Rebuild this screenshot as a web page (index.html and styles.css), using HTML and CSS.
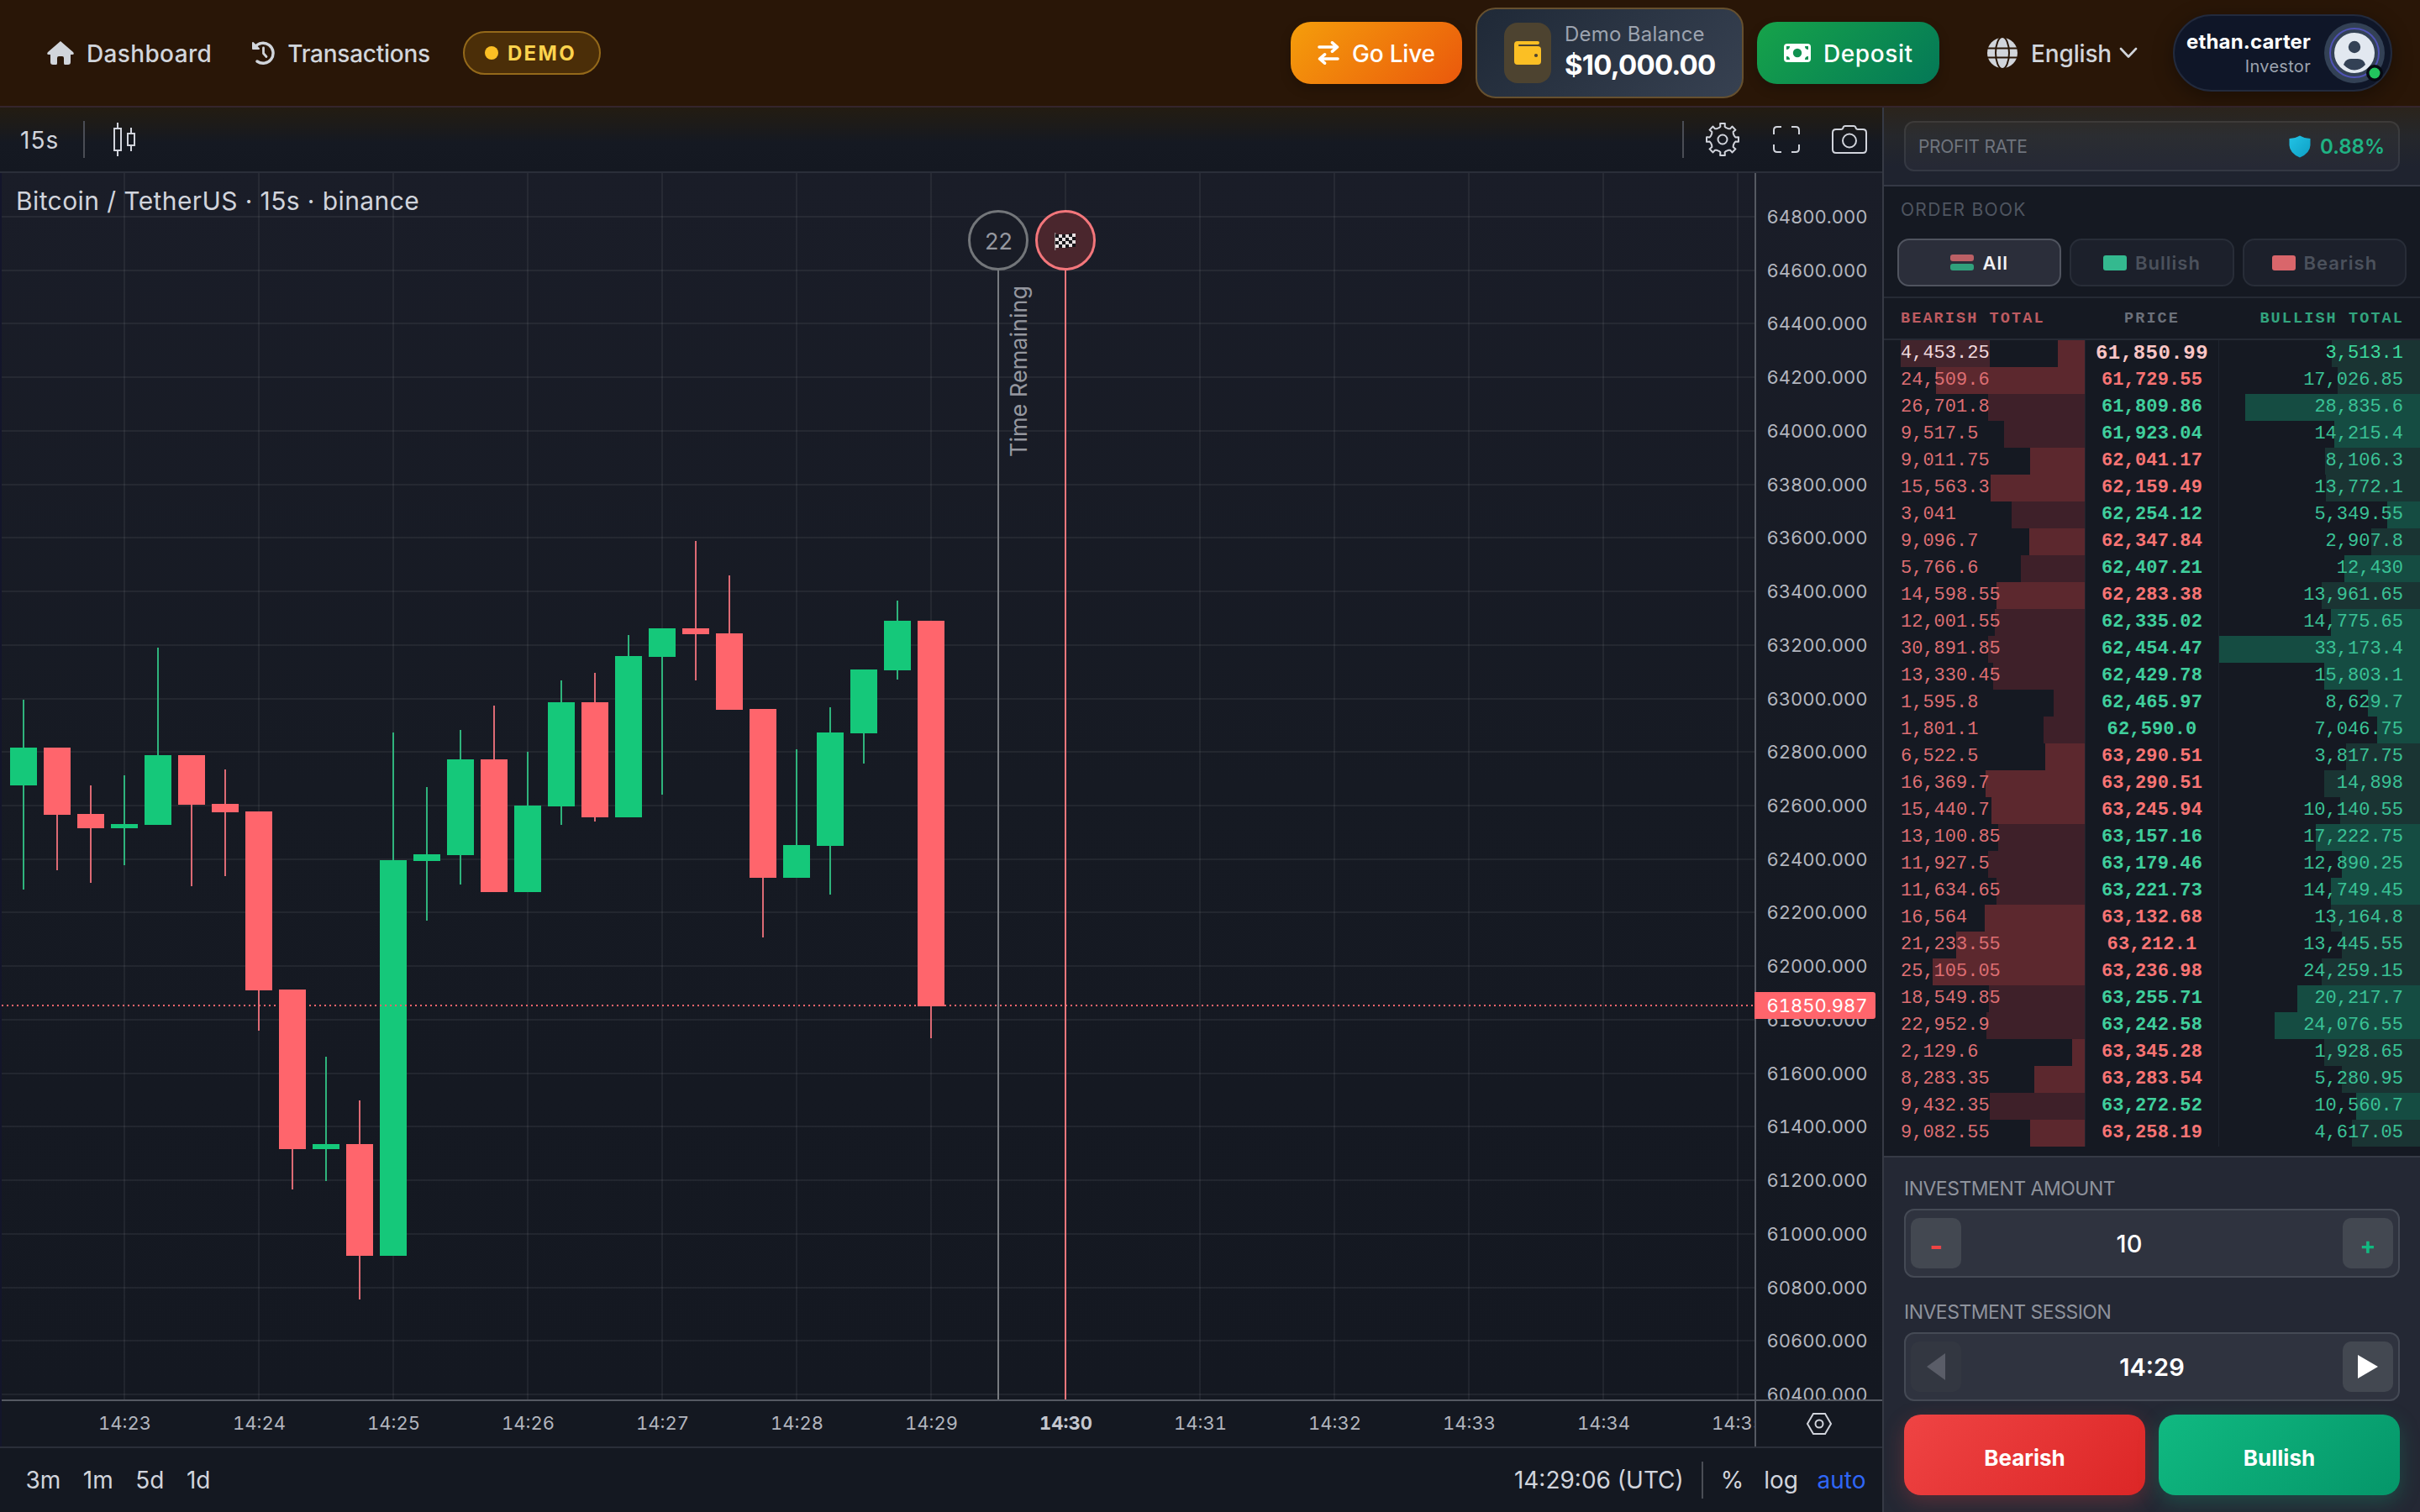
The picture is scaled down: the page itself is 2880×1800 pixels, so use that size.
FILE: index.html
```html
<!DOCTYPE html>
<html lang="en">
<head>
    <meta charset="UTF-8">
    <meta name="viewport" content="width=device-width, initial-scale=1.0">
    <title>Trading</title>
    <link rel="stylesheet" href="styles.css">
</head>
<body>
    <header class="header">
        <nav class="nav">
            <a class="nav-link">
                <svg width="32" height="28" viewBox="0 0 32 28"><path d="M16 0 L31 13 Q33 16 30 16 H28 V25 Q28 28 25 28 H21 Q20 28 20 26 V20 Q20 18 18 18 H14 Q12 18 12 20 V26 Q12 28 11 28 H7 Q4 28 4 25 V16 H2 Q-1 16 1 13 Z" fill="#d1d5db"/></svg>
                <span>Dashboard</span>
            </a>
            <a class="nav-link transactions">
                <svg width="28" height="28" viewBox="0 0 28 28" fill="none" stroke="#d1d5db" stroke-width="3.4" stroke-linecap="round" stroke-linejoin="round"><path d="M4.5 7 A12 12 0 1 1 7 24"/><path d="M2 2 V9 H9 Z" fill="#d1d5db" stroke-width="2"/><path d="M14.5 8 V14.5 L18 18.5" stroke-width="2.8"/></svg>
                <span>Transactions</span>
            </a>
            <span class="demo"><i class="demo-dot"></i>DEMO</span>
        </nav>
        <div class="header-right">
            <button class="btn btn-live">
                <svg width="26" height="28" viewBox="0 0 26 28" fill="none" stroke="#fff" stroke-width="3.6" stroke-linecap="round" stroke-linejoin="round"><path d="M2 7 H23 M17.5 1.8 L23.5 7 L17.5 12.2"/><path d="M24 21 H3 M8.5 15.8 L2.5 21 L8.5 26.2"/></svg>
                <span>Go Live</span>
            </button>
            <div class="balance">
                <span class="balance-icon">
                    <svg width="32" height="28" viewBox="0 0 32 28"><path d="M4 0 H28 Q30 0 30 2 Q30 4 28 4 H6 Q5 4 5 5 Q5 6 6 6 H28 Q32 6 32 10 V24 Q32 28 28 28 H4 Q0 28 0 24 V4 Q0 0 4 0 Z" fill="#fbbf24"/><circle cx="26" cy="17" r="2.1" fill="#4d4330"/></svg>
                </span>
                <span class="balance-text">
                    <span class="balance-label">Demo Balance</span>
                    <span class="balance-value">$10,000.00</span>
                </span>
            </div>
            <button class="btn btn-deposit">
                <svg width="32" height="22" viewBox="0 0 32 22"><rect width="32" height="22" rx="4" fill="#fff"/><circle cx="16" cy="11" r="5.2" fill="#119150"/><g fill="#119150"><path d="M3 3 H7 Q7 7 3 7 Z M29 3 H25 Q25 7 29 7 Z M3 19 H7 Q7 15 3 15 Z M29 19 H25 Q25 15 29 15 Z"/></g></svg>
                <span>Deposit</span>
            </button>
            <div class="lang">
                <svg width="36" height="36" viewBox="0 0 36 36"><circle cx="18" cy="18" r="18" fill="#d1d5db"/><g fill="none" stroke="#291607" stroke-width="2"><ellipse cx="18" cy="18" rx="8" ry="19"/><path d="M0 12.5 H36 M0 23.5 H36"/></g></svg>
                <span>English</span>
                <svg class="chevron" width="22" height="14" viewBox="0 0 22 14" fill="none" stroke="#d1d5db" stroke-width="2.6" stroke-linecap="round" stroke-linejoin="round"><path d="M2 2 L11 11.5 L20 2"/></svg>
            </div>
            <div class="profile">
                <div class="profile-text">
                    <span class="profile-name">ethan.carter</span>
                    <span class="profile-role">Investor</span>
                </div>
                <svg class="avatar" width="72" height="72" viewBox="0 0 72 72"><circle cx="36" cy="36" r="36" fill="#334155"/><circle cx="36" cy="36" r="29" fill="none" stroke="#4f52b5" stroke-width="2"/><circle cx="36" cy="36" r="24" fill="#e2e8f0"/><circle cx="36" cy="29" r="7.2" fill="#334155"/><path d="M23 50 Q25 43 32 43 H40 Q47 43 49 50 Q43 56.5 36 56.5 Q29 56.5 23 50 Z" fill="#334155"/><circle cx="60" cy="60" r="10" fill="#060a12"/><circle cx="60" cy="60" r="6.5" fill="#22c55e"/></svg>
            </div>
        </div>
    </header>

    <main class="main">
        <section class="chart">
            <div class="toolbar">
                <span class="interval">15s</span>
                <i class="sep"></i>
                <svg class="candle-icon" width="28" height="40" viewBox="0 0 28 40" fill="none" stroke="#d1d4dc" stroke-width="2"><path d="M6 0 V7 M6 33 V40 M2 7 H10 V33 H2 Z"/><path d="M22 6 V13 M22 27 V34 M18 13 H26 V27 H18 Z"/></svg>
                <div class="toolbar-right">
                    <i class="sep"></i>
                    <svg class="gear" width="40" height="40" viewBox="-20 -20 40 40" fill="none" stroke="#d1d4dc" stroke-width="2" stroke-linejoin="round"><path id="gear"/><circle r="5.5"/></svg>
                    <svg width="32" height="32" viewBox="0 0 32 32" fill="none" stroke="#d1d4dc" stroke-width="2"><path d="M1 10 V5 Q1 1 5 1 H10 M22 1 H27 Q31 1 31 5 V10 M31 22 V27 Q31 31 27 31 H22 M10 31 H5 Q1 31 1 27 V22"/></svg>
                    <svg width="42" height="34" viewBox="0 0 42 34" fill="none" stroke="#d1d4dc" stroke-width="2"><path d="M5 5 H11 Q13 5 13.5 3 Q14 1 16 1 H26 Q28 1 28.5 3 Q29 5 31 5 H37 Q41 5 41 9 V29 Q41 33 37 33 H5 Q1 33 1 29 V9 Q1 5 5 5 Z"/><circle cx="21" cy="18.5" r="8"/></svg>
                </div>
            </div>
            <svg class="plot" id="plot" width="2240" height="1516" viewBox="0 206 2240 1516"></svg>
            <div class="bottombar">
                <div class="ranges"><span>3m</span><span>1m</span><span>5d</span><span>1d</span></div>
                <div class="scale">
                    <span>14:29:06 (UTC)</span>
                    <i class="sep"></i>
                    <span>%</span>
                    <span class="log">log</span>
                    <span class="auto">auto</span>
                </div>
            </div>
        </section>

        <aside class="side">
            <div class="profit">
                <div class="profit-box">
                    <span>PROFIT RATE</span>
                    <span class="profit-rate">
                        <svg width="26" height="27" viewBox="0 0 26 27"><defs><linearGradient id="shield" x1="0" y1="0" x2="1" y2="1"><stop offset="0" stop-color="#22c3e6"/><stop offset="1" stop-color="#0e9fc4"/></linearGradient></defs><path d="M13 .5 Q18 3.5 25.5 4 V12 Q25 21.5 13 26.5 Q1 21.5 .5 12 V4 Q8 3.5 13 .5 Z" fill="url(#shield)"/></svg>
                        <b>0.88%</b>
                    </span>
                </div>
            </div>
            <div class="book-head">
                <div class="book-title">ORDER BOOK</div>
                <div class="tabs">
                    <button class="tab active"><i class="both"></i>All</button>
                    <button class="tab"><i class="sq green"></i>Bullish</button>
                    <button class="tab"><i class="sq red"></i>Bearish</button>
                </div>
            </div>
            <div class="book-cols">
                <span class="c-red">BEARISH TOTAL</span>
                <span class="c-mid">PRICE</span>
                <span class="c-green">BULLISH TOTAL</span>
            </div>
            <div class="book" id="book"></div>
            <div class="order">
                <label class="order-label">INVESTMENT AMOUNT</label>
                <div class="field">
                    <button class="step minus">-</button>
                    <span class="field-value amount">10</span>
                    <button class="step plus">+</button>
                </div>
                <label class="order-label">INVESTMENT SESSION</label>
                <div class="field">
                    <button class="step off"><svg width="22" height="32" viewBox="0 0 22 32"><path d="M22 0 V32 L0 16 Z" fill="#5a5d68"/></svg></button>
                    <span class="field-value">14:29</span>
                    <button class="step"><svg width="24" height="28" viewBox="0 0 24 28"><path d="M0 0 V28 L24 14 Z" fill="#fff"/></svg></button>
                </div>
                <div class="actions">
                    <button class="act bear">Bearish</button>
                    <button class="act bull">Bullish</button>
                </div>
            </div>
        </aside>
    </main>
    <script src="app.js"></script>
</body>
</html>
```

FILE: styles.css
```css
* {
    box-sizing: border-box;
}
body {
    margin: 0;
    width: 2880px;
    height: 1800px;
    overflow: hidden;
    background: #141821;
    color: #d1d4dc;
    font-family: Inter, "Liberation Sans", sans-serif;
    font-size: 28px;
    display: flex;
    flex-direction: column;
}
button {
    border: none;
    padding: 0;
    font-family: inherit;
    color: #fff;
}
svg {
    display: block;
    flex-shrink: 0;
}
span {
    white-space: nowrap;
}

/* header */
.header {
    height: 128px;
    flex-shrink: 0;
    background: #291607;
    border-bottom: 2px solid #35252c;
    display: flex;
    justify-content: space-between;
    align-items: center;
    padding: 0 33px 0 56px;
    font-weight: 500;
}
.nav, .header-right, .nav-link {
    display: flex;
    align-items: center;
}
.nav-link {
    gap: 15px;
    color: #d1d5db;
    margin-right: 47px;
    letter-spacing: 0.35px;
}
.nav-link span, .btn span, .lang span {
    padding-top: 1.5px;
}
.transactions {
    letter-spacing: -0.25px;
}
.demo {
    width: 164px;
    height: 52px;
    margin-left: -8px;
    border: 2px solid #94691a;
    border-radius: 26px;
    background: #4b2e08;
    color: #fcd34d;
    font-size: 24px;
    font-weight: 700;
    letter-spacing: 2.4px;
    display: flex;
    align-items: center;
    padding-left: 24px;
    gap: 11px;
}
.demo-dot {
    width: 16px;
    height: 16px;
    border-radius: 50%;
    background: #fbbf24;
}
.btn {
    height: 74px;
    border-radius: 24px;
    font-size: 28px;
    font-weight: 500;
    display: flex;
    align-items: center;
    gap: 15px;
    padding-left: 32px;
    box-shadow: 0 6px 14px rgba(0, 0, 0, 0.2);
}
.btn-live {
    width: 204px;
    background: linear-gradient(135deg, #f59e0b, #ea580c);
    letter-spacing: -0.2px;
}
.btn-deposit {
    width: 217px;
    background: linear-gradient(135deg, #16a34a, #047857);
    letter-spacing: 0.6px;
}
.balance {
    width: 319px;
    height: 108px;
    margin: 0 16px;
    border: 2px solid #66502f;
    border-radius: 24px;
    background: linear-gradient(135deg, #1f2937, #374151);
    display: flex;
    align-items: center;
    padding-left: 32px;
    gap: 16px;
}
.balance-icon {
    width: 56px;
    height: 72px;
    border-radius: 16px;
    background: #4d4330;
    display: flex;
    align-items: center;
    justify-content: center;
}
.balance-text {
    display: flex;
    flex-direction: column;
    padding-bottom: 5px;
}
.balance-label {
    font-size: 24px;
    line-height: 32px;
    font-weight: 400;
    letter-spacing: 0.25px;
    color: #9ca3af;
}
.balance-value {
    font-size: 33px;
    line-height: 40px;
    font-weight: 700;
    letter-spacing: -0.8px;
    color: #fff;
}
.lang {
    display: flex;
    align-items: center;
    margin-left: 57px;
    color: #d1d5db;
    gap: 16px;
    width: 221px;
    letter-spacing: -0.15px;
}
.chevron {
    margin-left: -7px;
}
.profile {
    width: 261px;
    height: 92px;
    border: 2px solid #222a3d;
    border-radius: 46px;
    background: #0f1628;
    box-shadow: 0 6px 24px rgba(0, 0, 0, 0.35);
    display: flex;
    align-items: center;
    justify-content: flex-end;
    padding-right: 7px;
    gap: 16px;
}
.profile-text {
    display: flex;
    flex-direction: column;
    align-items: flex-end;
    padding-top: 3px;
}
.profile-name {
    font-size: 24px;
    line-height: 30px;
    font-weight: 700;
    letter-spacing: 0.15px;
    color: #fff;
}
.profile-role {
    font-size: 20px;
    line-height: 29px;
    font-weight: 400;
    letter-spacing: 0.3px;
    color: #9ca3af;
}

/* chart */
.main {
    display: flex;
    flex: 1;
}
.chart {
    width: 2242px;
    border-right: 2px solid #363a45;
    display: flex;
    flex-direction: column;
}
.toolbar {
    height: 78px;
    border-bottom: 2px solid #2a2e39;
    background: linear-gradient(#231c12, #1d1b19 20px, #151922 42px, #141821);
    display: flex;
    align-items: center;
    padding: 0 18px 0 24px;
}
.interval {
    width: 75px;
    padding-top: 2px;
    letter-spacing: 1px;
}
.sep {
    width: 2px;
    height: 44px;
    background: #4a4d55;
}
.candle-icon {
    margin-left: 33px;
}
.toolbar-right {
    margin-left: auto;
    display: flex;
    align-items: center;
    gap: 38px;
}
.gear {
    margin: 0 2px 0 -12px;
}
.bottombar {
    height: 78px;
    border-top: 2px solid #2a2e39;
    display: flex;
    justify-content: space-between;
    align-items: center;
    padding: 0 19.5px 0 30.5px;
}
.ranges, .scale {
    display: flex;
    align-items: center;
}
.ranges {
    gap: 26.5px;
}
.scale .sep {
    margin: 0 21px;
}
.log {
    margin: 0 22.5px 0 24px;
}
.auto {
    color: #2f66f6;
}
.grid {
    stroke: #fff;
    stroke-opacity: 0.06;
    stroke-width: 2;
}
.axis {
    stroke: #555962;
    stroke-width: 2;
}
.axis-text {
    fill: #b2b5be;
    font-size: 22px;
    font-variant-numeric: tabular-nums;
}
.axis-text.strong {
    font-weight: 700;
    fill: #c4c7cf;
}
.axis-text.last {
    fill: #fff;
}
.up {
    fill: #15c87a;
}
.down {
    fill: #ff656c;
}
.wick-up {
    fill: #2fb37c;
}
.wick-down {
    fill: #dc6a74;
}
.title {
    fill: #d1d4dc;
    font-size: 30px;
    letter-spacing: 0.4px;
}
.timer {
    fill: #95979f;
    font-size: 27px;
}

/* side panel */
.side {
    width: 638px;
    display: flex;
    flex-direction: column;
    background: #151922;
}
.profit {
    height: 94px;
    border-bottom: 2px solid #343845;
    background: linear-gradient(#2b241c, #25272b 34px, #1f232f 70px);
    padding: 16px 24px;
}
.profit-box {
    height: 60px;
    border: 2px solid rgba(255, 255, 255, 0.07);
    border-radius: 12px;
    background: rgba(255, 255, 255, 0.03);
    display: flex;
    justify-content: space-between;
    align-items: center;
    padding: 0 16px 0 15px;
    font-size: 21px;
    letter-spacing: -0.3px;
    color: #6f747d;
}
.profit-rate {
    display: flex;
    align-items: center;
    gap: 11px;
    color: #1fb384;
    font-size: 24px;
    letter-spacing: 0;
}
.profit-rate b {
    font-weight: 600;
}
.book-head {
    height: 133px;
    border-bottom: 2px solid #252a34;
    padding: 14px 16px 0;
}
.book-title {
    font-size: 21px;
    line-height: 28px;
    height: 48px;
    padding-left: 4px;
    letter-spacing: 1.3px;
    color: #4f5560;
}
.tabs {
    display: flex;
    gap: 10px;
}
.tab {
    flex: 1;
    height: 57px;
    border: 2px solid #282d38;
    border-radius: 14px;
    background: #1c202b;
    color: #4b515c;
    font-size: 22px;
    font-weight: 600;
    letter-spacing: 1px;
    display: flex;
    align-items: center;
    justify-content: center;
    gap: 10px;
}
.tab.active {
    background: #2b2e3a;
    border-color: #50545f;
    color: #f0f1f4;
}
.sq, .both {
    width: 28px;
    height: 18px;
    border-radius: 3px;
}
.green {
    background: #34b98f;
}
.red {
    background: #d9666b;
}
.both {
    height: 19px;
    display: flex;
    flex-direction: column;
    justify-content: space-between;
}
.both::before, .both::after {
    content: "";
    height: 8px;
    border-radius: 3px;
    background: #bb6065;
}
.both::after {
    background: #31a07c;
}
.book-cols, .row {
    display: grid;
    grid-template-columns: 1.5fr 1fr 1.5fr;
    font-family: "Liberation Mono", monospace;
}
.book-cols {
    height: 50px;
    border-bottom: 2px solid #252a34;
    align-items: center;
    font-size: 18.5px;
    font-weight: 700;
    letter-spacing: 2.1px;
}
.c-red {
    color: #bd5b61;
    padding-left: 20px;
}
.c-mid {
    color: #6b707a;
    text-align: center;
}
.c-green {
    color: #32a47e;
    text-align: right;
    padding-right: 19px;
}
.book {
    height: 971px;
}
.row {
    height: 32px;
    line-height: 32px;
    font-size: 22px;
}
.cell {
    display: flex;
    padding: 0 20px;
    color: #dd6e72;
    background: linear-gradient(#3e2029, #3e2029) no-repeat right / var(--w) 100%;
}
.row .cell:last-child {
    justify-content: flex-end;
    color: #3ac296;
    background-image: linear-gradient(#154c42, #154c42);
}
.row.fall .cell:first-child {
    background-image: linear-gradient(#5c282e, #5c282e);
}
.row.fall .cell:last-child {
    background-image: linear-gradient(#1a3433, #1a3433);
}
.price {
    text-align: center;
    font-weight: 700;
    letter-spacing: 0.15px;
    color: #40cf9d;
    border-left: 1px solid #1f242e;
    border-right: 1px solid #1f242e;
}
.fall .price {
    color: #f87474;
}
.row.current .price {
    color: #fbc6c6;
    font-size: 24px;
    letter-spacing: 0.5px;
}
.row.current .cell:first-child {
    color: #efd9de;
}
.row.current .cell:last-child {
    color: #3ddc9f;
}
.current .cell:first-child span {
    background: #42242c;
}
.order {
    flex: 1;
    border-top: 2px solid #363a45;
    background: #242834;
    padding: 20px 24px 0;
}
.order-label {
    display: block;
    height: 41px;
    line-height: 34px;
    font-size: 23px;
    letter-spacing: -0.5px;
    color: #8e929c;
}
.field {
    height: 82px;
    border: 2px solid #454a55;
    border-radius: 12px;
    background: #2f333f;
    display: flex;
    align-items: center;
    justify-content: space-between;
    padding: 0 6px;
    margin-bottom: 24px;
}
.step {
    width: 60px;
    height: 60px;
    border-radius: 10px;
    background: #434851;
    display: flex;
    align-items: center;
    justify-content: center;
    font-size: 28px;
    font-weight: 700;
}
.step.off {
    background: #333741;
}
.minus {
    color: #ef4444;
    font-size: 34px;
    padding-top: 5px;
}
.plus {
    color: #10b981;
    padding-top: 6px;
}
.field-value {
    font-size: 29px;
    font-weight: 600;
    color: #fff;
}
.amount {
    padding-right: 54px;
    font-weight: 500;
}
.actions {
    display: flex;
    gap: 16px;
    margin-top: -8px;
}
.act {
    flex: 1;
    height: 96px;
    border-radius: 20px;
    font-size: 26px;
    font-weight: 700;
    padding-top: 6px;
}
.bear {
    background: linear-gradient(135deg, #ef4444, #dc2626);
    box-shadow: 0 8px 24px rgba(239, 68, 68, 0.25);
}
.bull {
    background: linear-gradient(135deg, #10b981, #059669);
    box-shadow: 0 8px 24px rgba(16, 185, 129, 0.25);
}
```

FILE: app.js
```js
const plot = document.getElementById('plot')
const firstLine = 258
const lineStep = 63.73
let out = ''

out += '<defs><linearGradient id="bg" x1="0" y1="0" x2="0" y2="1"><stop offset="0" stop-color="#1a1d28"/><stop offset="0.5" stop-color="#161a23"/><stop offset="1" stop-color="#141821"/></linearGradient>'
out += '<clipPath id="priceClip"><rect x="2090" y="206" width="150" height="1460"/></clipPath>'
out += '<clipPath id="timeClip"><rect x="2" y="1668" width="2086" height="54"/></clipPath></defs>'
out += '<rect x="0" y="206" width="2240" height="1460" fill="url(#bg)"/>'

// grid and axis labels
let labels = ''
for (let i = 0; i <= 22; i++) {
    const y = Math.round(firstLine + i * lineStep)
    out += `<line class="grid" x1="2" y1="${y}" x2="2088" y2="${y}"/>`
    labels += `<text class="axis-text" x="2102.5" y="${y + 8}">${64800 - i * 200}.000</text>`
}
let times = ''
for (let i = 0; i <= 12; i++) {
    const x = 148 + i * 160
    out += `<line class="grid" x1="${x}" y1="206" x2="${x}" y2="1666"/>`
    times += `<text class="axis-text${i === 7 ? ' strong' : ''}" x="${x + 0.5}" y="1702" text-anchor="middle">14:${23 + i}</text>`
}

// wick top, body top, body bottom, wick bottom
const candles = [
    ['up', 833, 890, 935, 1059], ['down', 890, 890, 970, 1036], ['down', 935, 969, 986, 1051], ['up', 923, 981, 986, 1030],
    ['up', 771, 899, 982, 982], ['down', 899, 899, 958, 1055], ['down', 916, 957, 967, 1043], ['down', 966, 966, 1179, 1227],
    ['down', 1178, 1178, 1368, 1416], ['up', 1258, 1362, 1368, 1406], ['down', 1310, 1362, 1495, 1547], ['up', 872, 1024, 1495, 1495],
    ['up', 937, 1017, 1025, 1096], ['up', 869, 904, 1018, 1053], ['down', 840, 904, 1062, 1062], ['up', 895, 959, 1062, 1062],
    ['up', 810, 836, 960, 982], ['down', 801, 836, 973, 978], ['up', 756, 781, 973, 973], ['up', 748, 748, 782, 946],
    ['down', 644, 748, 755, 810], ['down', 685, 754, 845, 845], ['down', 844, 844, 1045, 1116], ['up', 892, 1006, 1045, 1045],
    ['up', 842, 872, 1007, 1065], ['up', 797, 797, 873, 909], ['up', 715, 739, 798, 809], ['down', 739, 739, 1198, 1236]
]
candles.forEach(([dir, high, a, b, low], i) => {
    const x = 28 + i * 40
    out += `<rect class="wick-${dir}" x="${x - 1}" y="${high}" width="2" height="${low - high}"/>`
    out += `<rect class="${dir}" x="${x - 16}" y="${a}" width="32" height="${b - a}"/>`
})

// last price
out += '<line x1="2" y1="1197" x2="2088" y2="1197" stroke="#ff656c" stroke-width="2" stroke-dasharray="2 4"/>'

// session markers
out += '<line x1="1188" y1="321" x2="1188" y2="1666" stroke="#787b80" stroke-width="2"/>'
out += '<circle cx="1188" cy="286" r="34.5" fill="#191c26" stroke="#73767a" stroke-width="3"/>'
out += '<line x1="1268" y1="321" x2="1268" y2="1666" stroke="#f3767b" stroke-width="2"/>'
out += '<circle cx="1268" cy="286" r="34.5" fill="#4a262d" stroke="#f3767b" stroke-width="3"/>'
out += '<text class="timer" x="1188.5" y="297" text-anchor="middle">22</text>'
out += '<text class="timer" transform="translate(1222 544) rotate(-90)">Time Remaining</text>'
out += '<rect x="1255" y="277" width="1.4" height="21" fill="#8a8486"/>'
for (let r = 0; r < 4; r++) {
    for (let c = 0; c < 6; c++) {
        const y = 279 + r * 4 - (c > 3 ? 1 : 0)
        out += `<rect x="${1256 + c * 4}" y="${y}" width="4" height="4" fill="${(r + c) % 2 ? '#e6dfe0' : '#17161a'}"/>`
    }
}

out += `<g clip-path="url(#priceClip)">${labels}</g><g clip-path="url(#timeClip)">${times}</g>`
out += '<path class="axis" d="M2089 206 V1722 M2 1667 H2240"/>'
out += '<path class="down" d="M2088 1181 H2229 Q2232 1181 2232 1184 V1210 Q2232 1213 2229 1213 H2088 Z"/>'
out += '<text class="axis-text last" x="2102.5" y="1205">61850.987</text>'
out += '<g fill="none" stroke="#d1d4dc" stroke-width="2"><path d="M2158 1683 H2172 L2179 1695 L2172 1707 H2158 L2151 1695 Z"/><circle cx="2165" cy="1695" r="4.5"/></g>'
out += '<text class="title" x="19" y="250">Bitcoin / TetherUS · 15s · binance</text>'
out += '<rect x="0" y="206" width="2" height="1516" fill="#13152b"/>'
plot.innerHTML = out

// gear outline, eight teeth
let gear = ''
for (let i = 0; i < 8; i++) {
    [[-0.3, 14.5], [-0.17, 15.5], [-0.15, 19.2], [0.15, 19.2], [0.17, 15.5], [0.3, 14.5]].forEach(([da, r]) => {
        const a = i * Math.PI / 4 + da
        gear += `${gear ? 'L' : 'M'}${(r * Math.sin(a)).toFixed(2)} ${(-r * Math.cos(a)).toFixed(2)}`
    })
}
document.getElementById('gear').setAttribute('d', gear + 'Z')

// order book: bearish total, bar, price, bullish total, bar, direction
const rows = [
    ['4,453.25', 32, '61,850.99', '3,513.1', 105, 0], ['24,509.6', 177, '61,729.55', '17,026.85', 98, 0],
    ['26,701.8', 115, '61,809.86', '28,835.6', 208, 1], ['9,517.5', 96, '61,923.04', '14,215.4', 102, 1],
    ['9,011.75', 65, '62,041.17', '8,106.3', 113, 0], ['15,563.3', 112, '62,159.49', '13,772.1', 112, 0],
    ['3,041', 87, '62,254.12', '5,349.55', 39, 1], ['9,096.7', 66, '62,347.84', '2,907.8', 58, 0],
    ['5,766.6', 76, '62,407.21', '12,430', 90, 1], ['14,598.55', 105, '62,283.38', '13,961.65', 117, 0],
    ['12,001.55', 107, '62,335.02', '14,775.65', 106, 1], ['30,891.85', 115, '62,454.47', '33,173.4', 239, 1],
    ['13,330.45', 109, '62,429.78', '15,803.1', 114, 1], ['1,595.8', 37, '62,465.97', '8,629.7', 62, 1],
    ['1,801.1', 49, '62,590.0', '7,046.75', 51, 1], ['6,522.5', 47, '63,290.51', '3,817.75', 88, 0],
    ['16,369.7', 118, '63,290.51', '14,898', 114, 0], ['15,440.7', 111, '63,245.94', '10,140.55', 95, 0],
    ['13,100.85', 103, '63,157.16', '17,222.75', 124, 1], ['11,927.5', 115, '63,179.46', '12,890.25', 93, 1],
    ['11,634.65', 105, '63,221.73', '14,749.45', 106, 1], ['16,564', 119, '63,132.68', '13,164.8', 106, 0],
    ['21,233.55', 153, '63,212.1', '13,445.55', 93, 0], ['25,105.05', 181, '63,236.98', '24,259.15', 117, 0],
    ['18,549.85', 114, '63,255.71', '20,217.7', 146, 1], ['22,952.9', 117, '63,242.58', '24,076.55', 173, 1],
    ['2,129.6', 15, '63,345.28', '1,928.65', 114, 0], ['8,283.35', 60, '63,283.54', '5,280.95', 93, 0],
    ['9,432.35', 113, '63,272.52', '10,560.7', 76, 1], ['9,082.55', 65, '63,258.19', '4,617.05', 81, 0]
]
document.getElementById('book').innerHTML = rows.map((r, i) => `
    <div class="row${r[5] ? '' : ' fall'}${i ? '' : ' current'}">
        <div class="cell" style="--w: ${r[1]}px"><span>${r[0]}</span></div>
        <div class="price">${r[2]}</div>
        <div class="cell" style="--w: ${r[4]}px"><span>${r[3]}</span></div>
    </div>`).join('')
```
